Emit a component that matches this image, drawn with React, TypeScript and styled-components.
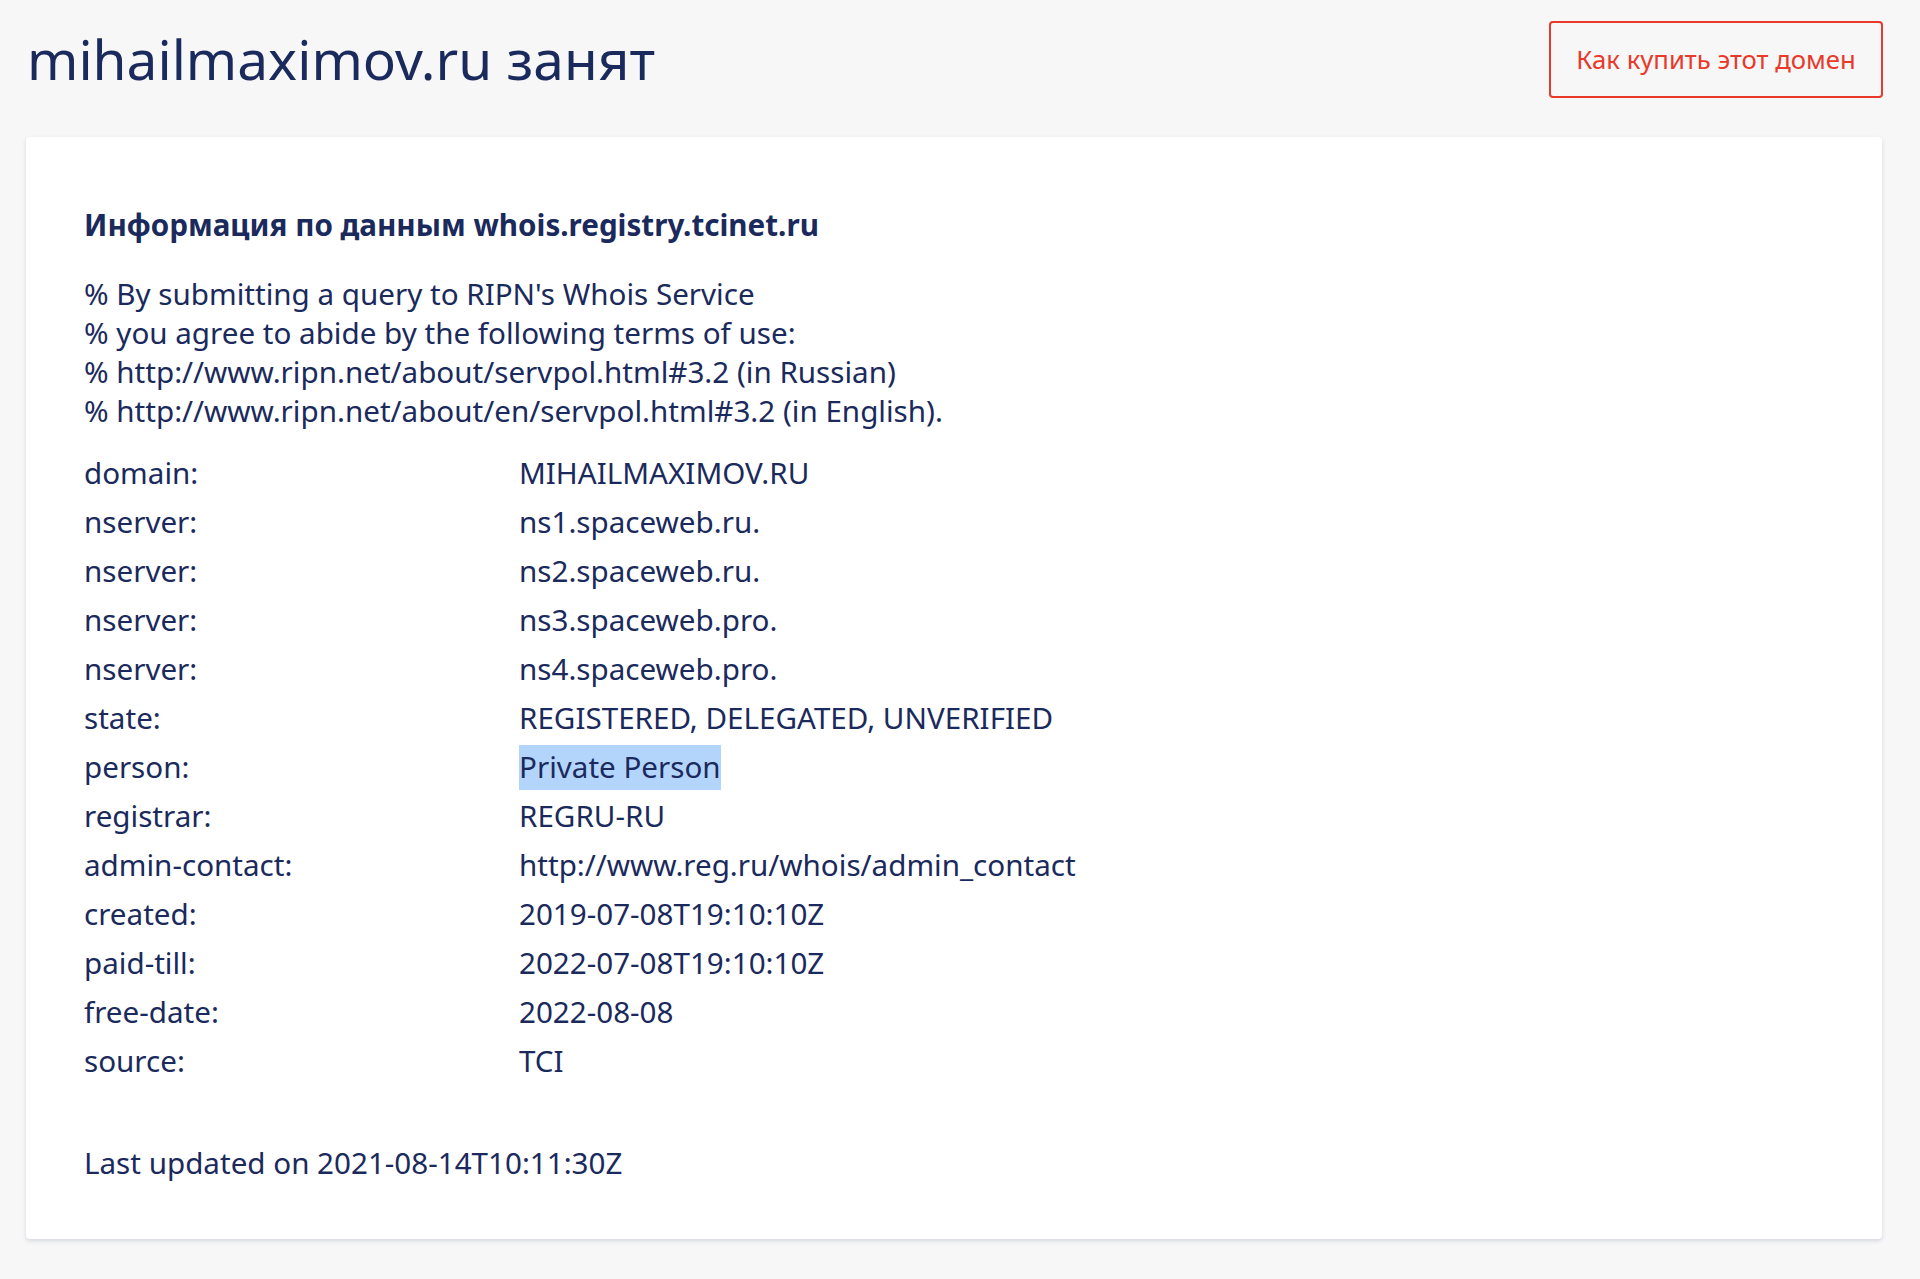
import React from 'react';
import styled, { createGlobalStyle } from 'styled-components';

const GlobalStyle = createGlobalStyle`
  html, body {
    margin: 0;
    padding: 0;
    background: #f7f7f7;
  }
  body {
    font-family: "Noto Sans", "Open Sans", sans-serif;
    color: #1b2a5c;
  }
`

const Page = styled.div`
  min-height: 1279px;
  padding: 0 38px 0 26px;
  box-sizing: border-box;
`

const Top = styled.header`
  display: flex;
  justify-content: space-between;
  align-items: center;
  height: 118px;
  padding-left: 1px;
`

const Title = styled.h1`
  margin: 0;
  font-size: 55px;
  font-weight: 400;
  line-height: 1.2;
  color: #1b2a5c;
`

const BuyButton = styled.a`
  display: flex;
  align-items: center;
  justify-content: center;
  box-sizing: border-box;
  width: 334px;
  height: 77px;
  border: 2px solid #e8392a;
  border-radius: 4px;
  color: #e8392a;
  font-size: 25.7px;
  text-decoration: none;
  margin-right: -1px;
`

const Card = styled.section`
  margin-top: 19px;
  background: #fff;
  border-radius: 4px;
  box-shadow: 0 2px 4px rgba(40, 50, 110, 0.16);
  padding: 68px 58px 57px;
  font-size: 29.6px;
  line-height: 39px;
`

const CardTitle = styled.h2`
  margin: 0 0 30px;
  font-size: 29.6px;
  font-weight: 700;
  line-height: 39px;
`

const Notice = styled.div`
  margin-bottom: 18px;
`

const Rows = styled.div`
  display: grid;
  grid-template-columns: 435px 1fr;
  grid-auto-rows: 49px;
  align-items: center;
`

const Label = styled.div``

const Value = styled.div``

const Selected = styled.span`
  background: #b3d5fc;
  padding: 1px 0 3px;
`

const Updated = styled.div`
  margin-top: 58px;
`

const rows: [string, string][] = [
  ['domain:', 'MIHAILMAXIMOV.RU'],
  ['nserver:', 'ns1.spaceweb.ru.'],
  ['nserver:', 'ns2.spaceweb.ru.'],
  ['nserver:', 'ns3.spaceweb.pro.'],
  ['nserver:', 'ns4.spaceweb.pro.'],
  ['state:', 'REGISTERED, DELEGATED, UNVERIFIED'],
  ['person:', 'Private Person'],
  ['registrar:', 'REGRU-RU'],
  ['admin-contact:', 'http://www.reg.ru/whois/admin_contact'],
  ['created:', '2019-07-08T19:10:10Z'],
  ['paid-till:', '2022-07-08T19:10:10Z'],
  ['free-date:', '2022-08-08'],
  ['source:', 'TCI'],
]

export default function App() {
  return (
    <Page>
      <GlobalStyle />
      <Top>
        <Title>mihailmaximov.ru занят</Title>
        <BuyButton href="#">Как купить этот домен</BuyButton>
      </Top>
      <Card>
        <CardTitle>Информация по данным whois.registry.tcinet.ru</CardTitle>
        <Notice>
          % By submitting a query to RIPN's Whois Service<br />
          % you agree to abide by the following terms of use:<br />
          % http://www.ripn.net/about/servpol.html#3.2 (in Russian)<br />
          % http://www.ripn.net/about/en/servpol.html#3.2 (in English).
        </Notice>
        <Rows>
          {rows.map(([label, value], i) => (
            <React.Fragment key={i}>
              <Label>{label}</Label>
              <Value>{label === 'person:' ? <Selected>{value}</Selected> : value}</Value>
            </React.Fragment>
          ))}
        </Rows>
        <Updated>Last updated on 2021-08-14T10:11:30Z</Updated>
      </Card>
    </Page>
  );
}
